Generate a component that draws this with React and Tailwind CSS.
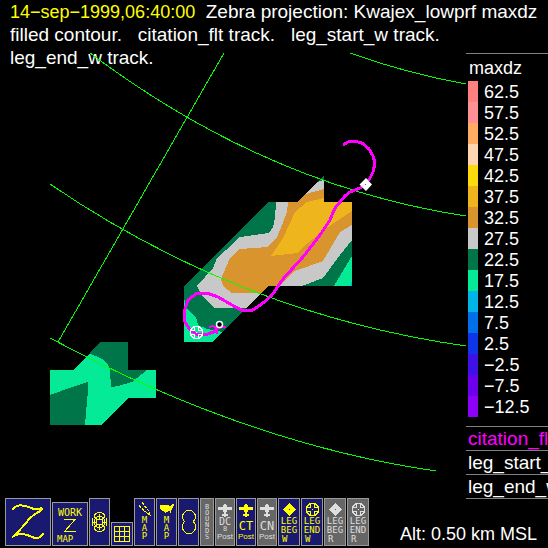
import clsx from "clsx";

const LEVELS = [
  { label: "62.5", color: "bg-[#ff8080]" },
  { label: "57.5", color: "bg-[#ff9096]" },
  { label: "52.5", color: "bg-[#ffad60]" },
  { label: "47.5", color: "bg-[#ffd6b0]" },
  { label: "42.5", color: "bg-[#fbdb0c]" },
  { label: "37.5", color: "bg-[#eeb61c]" },
  { label: "32.5", color: "bg-[#d9942e]" },
  { label: "27.5", color: "bg-[#c8c8c8]" },
  { label: "22.5", color: "bg-[#00754a]" },
  { label: "17.5", color: "bg-[#05ea96]" },
  { label: "12.5", color: "bg-[#00b4e8]" },
  { label: "7.5", color: "bg-[#0070e8]" },
  { label: "2.5", color: "bg-[#1034e8]" },
  { label: "−2.5", color: "bg-[#4010e8]" },
  { label: "−7.5", color: "bg-[#6c00ec]" },
  { label: "−12.5", color: "bg-[#8c00f8]" },
];

const TRACKS = [
  { name: "citation_flt", color: "text-[#ff00ff]" },
  { name: "leg_start_w", color: "text-white" },
  { name: "leg_end_w", color: "text-white" },
];

function WheelShape() {
  return (
    <g fill="none" stroke="currentColor" shapeRendering="crispEdges">
      <path d="M2.5 2.5V1.5H3.5V.5H9.5V1.5H10.5V2.5H11.5V3.5H12.5V9.5H11.5V10.5H10.5V11.5H9.5V12.5H3.5V11.5H2.5V10.5H1.5V9.5H.5V3.5H1.5V2.5Z" />
      <path d="M4.5 1V4.5H1M8.5 1V4.5H12M4.5 12V8.5H1M8.5 12V8.5H12M6 6.5H7" />
    </g>
  );
}

function WheelIcon() {
  return (
    <svg className="h-[13px] w-[13px] shrink-0" viewBox="0 0 13 13">
      <WheelShape />
    </svg>
  );
}

function DiamondIcon() {
  return (
    <svg className="h-[13px] w-[13px] shrink-0" viewBox="0 0 13 13">
      <path
        fill="currentColor"
        fillRule="evenodd"
        shapeRendering="crispEdges"
        d="M6.5 0L13 6.5L6.5 13L0 6.5ZM6 6H7V7H6Z"
      />
    </svg>
  );
}

function PlaneIcon() {
  return (
    <svg className="h-[13px] w-3.5 shrink-0" viewBox="0 0 14 13">
      <path
        fill="currentColor"
        shapeRendering="crispEdges"
        d="M6 0H8V1H9V3H14V6H9V8H8V10H10V12H8V13H6V12H4V10H6V8H5V6H0V3H5V1H6Z"
      />
    </svg>
  );
}

function ToolButton({ label, active = true, className, children }) {
  return (
    <button
      type="button"
      aria-label={label}
      className={clsx(
        "flex shrink-0 flex-col items-center overflow-hidden border border-[#999] font-['DejaVu_Sans_Mono',monospace] text-[9px] leading-[9px]",
        active ? "bg-[#191970] text-[#ffff00]" : "bg-[#666] text-[#dedede]",
        className,
      )}
    >
      {children}
    </button>
  );
}

function VerticalWord({ word, className }) {
  return (
    <span className={clsx("flex flex-col items-center", className)}>
      {word.split("").map((letter, i) => (
        <span key={i}>{letter}</span>
      ))}
    </span>
  );
}

function LegButton({ label, name, side, active, icon }) {
  return (
    <ToolButton label={label} active={active} className="h-12 w-[22px] pt-1">
      {icon}
      <span className="pt-px">LEG</span>
      <span>{name}</span>
      <span className="self-start pl-[3px]">{side}</span>
    </ToolButton>
  );
}

function PostButton({ label, name, sub, active }) {
  return (
    <ToolButton label={label} active={active} className="h-12 w-5 pt-[5px]">
      <PlaneIcon />
      {sub ? (
        <>
          <span className="text-[10px] leading-[9px]">{name}</span>
          <span className="text-[7px] leading-[6px]">{sub}</span>
        </>
      ) : (
        <span className="pt-[3px] text-[12px] leading-[12px]">{name}</span>
      )}
      <span className="font-['Liberation_Sans_Narrow','Liberation_Sans',sans-serif] text-[8px] leading-[9px]">
        Post
      </span>
    </ToolButton>
  );
}

function Toolbar() {
  return (
    <nav className="flex items-end gap-px">
      <ToolButton label="Zebra" className="h-12 w-[46px]">
        <svg className="h-[46px] w-11" viewBox="1 1 44 46">
          <g fill="none" stroke="currentColor" shapeRendering="crispEdges">
            <path
              strokeWidth="2"
              d="M7 12L10 9Q13 7 16 7.3Q22 8 26 10Q32 12.5 37.5 9.5M7 39Q12 35.5 18 36Q23 37 27 39Q32 41.5 36 38.5L38.5 35"
            />
            <path
              strokeWidth="2"
              d="M37.5 10.5Q36 13 31 15.5Q24 20 21 25Q16 31 7 39.5"
            />
          </g>
        </svg>
      </ToolButton>
      <ToolButton label="Work map" className="h-11 w-9 px-1 pt-[5px]">
        <span className="text-[10px] leading-[9px]">WORK</span>
        <svg className="my-0.5 h-3.5 w-3" viewBox="0 0 12 14">
          <path
            fill="none"
            stroke="currentColor"
            shapeRendering="crispEdges"
            d="M0 .5H11L.5 12.5H12"
          />
        </svg>
        <span className="self-start">MAP</span>
      </ToolButton>
      <ToolButton label="Radar" className="h-12 w-[21px] justify-center">
        <svg className="h-5 w-[17px]" viewBox="0 0 17 20">
          <g fill="none" stroke="currentColor" shapeRendering="crispEdges">
            <circle cx="8.5" cy="10" r="3" />
            <circle cx="8.5" cy="10" r="5.5" />
            <path d="M3 3.5Q5 .5 8.5 .5T14 3.5M3 16.5Q5 19.5 8.5 19.5T14 16.5M1.5 6V14M15.5 6V14M8.5 2V7M8.5 13V18M1 10H6M11 10H16M3 4.5L6 7.5M14 4.5L11 7.5M3 15.5L6 12.5M14 15.5L11 12.5" />
          </g>
        </svg>
      </ToolButton>
      <ToolButton label="Grid" className="h-6 w-[22px] justify-center">
        <svg className="h-4 w-4" viewBox="0 0 16 16">
          <path
            fill="none"
            stroke="currentColor"
            shapeRendering="crispEdges"
            d="M.5 .5H15.5V15.5H.5ZM5.5 0V16M10.5 0V16M0 5.5H16M0 10.5H16"
          />
        </svg>
      </ToolButton>
      <ToolButton label="Flight map" className="h-12 w-[21px] pt-[3px]">
        <svg className="h-3.5 w-3.5 shrink-0" viewBox="0 0 14 14">
          <path
            fill="none"
            stroke="currentColor"
            shapeRendering="crispEdges"
            d="M1 3.5L3 5.5M4 6.5L6 8.5M6 9.5H8M8 10.5L13 13.5M4 .5L6 2.5M6.5 4L8.5 6M9 7L11 9M11.5 9.5V12.5"
          />
        </svg>
        <VerticalWord word="MAP" className="leading-[8px]" />
      </ToolButton>
      <ToolButton label="US map" className="h-12 w-[21px] pt-[5px]">
        <svg className="mb-[3px] h-[9px] w-3.5 shrink-0" viewBox="0 0 14 9">
          <path
            fill="currentColor"
            shapeRendering="crispEdges"
            d="M0 1H9V2H10L11 1H12V0H14V2H13V4H12V6H11V9H10V7H8V8H6V9H5V8H4V7H2V6H1V5H0Z"
          />
        </svg>
        <VerticalWord word="MAP" className="leading-[8px]" />
      </ToolButton>
      <ToolButton label="Figure eight" className="h-12 w-[21px] justify-center">
        <svg className="h-6 w-3.5" viewBox="0 0 14 24">
          <path
            fill="none"
            stroke="currentColor"
            shapeRendering="crispEdges"
            d="M4.5 .5H9.5L11.5 2.5L13.5 5V8L11.5 11.5L13.5 15V19L11.5 21.5L9.5 23.5H4.5L2.5 21.5L.5 19V15L2.5 11.5L.5 8V5L2.5 2.5Z"
          />
        </svg>
      </ToolButton>
      <ToolButton label="Bounds" active={false} className="h-12 w-3.5 pt-[5px]">
        <VerticalWord word="BOUNDS" className="text-[7px] leading-[6px]" />
      </ToolButton>
      <PostButton label="DC8 post" name="DC" sub="8" active={false} />
      <PostButton label="CT post" name="CT" active />
      <PostButton label="CN post" name="CN" active={false} />
      <LegButton label="Leg begin W" name="BEG" side="W" active icon={<DiamondIcon />} />
      <LegButton label="Leg end W" name="END" side="W" active icon={<WheelIcon />} />
      <LegButton label="Leg begin R" name="BEG" side="R" active={false} icon={<DiamondIcon />} />
      <LegButton label="Leg end R" name="END" side="R" active={false} icon={<WheelIcon />} />
    </nav>
  );
}

function RadarMap() {
  return (
    <svg
      className="min-w-0 flex-1 self-start"
      viewBox="0 53 466 446"
      role="img"
      aria-label="Filled contour of maxdz with aircraft track"
    >
      {/* main echo, outermost level first */}
      <g shapeRendering="crispEdges">
        <path fill="#00754a" d="M184 342V286L268 202H297L324 175V202H352V286H268L212 342Z" />
        <path
          fill="#c8c8c8"
          d="M276 202H297L317 182L324 180V202H352V240L340 255L323 278L302 286H268L247 308H215L203 297L197 286L213 268L217 258L226 250L240 237L269 233L273 227L275 218Z"
        />
        <path
          fill="#d9942e"
          d="M288 202H297L306 194L324 189V202H352V225L340 232L323 261L295 271L283 282L279 286H268L261 293H232L224 287L221 280L223 274L230 258L238 250L240 249L268 247L277 237L282 225L287 212Z"
        />
        <path
          fill="#eeb61c"
          d="M271 256L283 238L295 212L307 202L324 198V202H352V211L328 227L308 243L297 253Z"
        />
        <path fill="#05ea96" d="M334 286L352 256V286Z" />
        <path fill="#00b4e8" d="M350 286L352 281V286Z" />
        <path
          fill="#05ea96"
          d="M184 298L188 310L196 317L198 325L207 329L222 332L212 342H184Z"
        />
      </g>

      {/* second echo */}
      <g shapeRendering="crispEdges">
        <path
          fill="#05ea96"
          d="M50 370H73L101 342H128V370H156V398H128L102 425H50Z"
        />
        <path
          fill="#00754a"
          d="M89 353L101 342H128V370H147L132 382L118 386L111 387L110 370L108 365L102 359Z"
        />
        <path fill="#00754a" d="M50 395L72 387L88 382V390L85 425H50Z" />
      </g>

      {/* lat/lon grid */}
      <g fill="none" stroke="#00ff00" shapeRendering="crispEdges">
        <path d="M224 53L58 342" />
        <path d="M350 53Q405 73 466 84" />
        <path d="M90 53Q267 186 466 216" />
        <path d="M50 184Q240 314 466 346" />
        <path d="M50 338Q248 444 436 471" />
      </g>

      <g fill="none" stroke="#ff00ff" shapeRendering="crispEdges">
        <path
          strokeWidth="3"
          strokeLinejoin="round"
          d="M343 145L348 142L354 141L362 143L369 149L373 156L375 163L373 172L370 178L366 184L360 188L350 192L345 196L340 202L335 208L330 220L320 235L303 257L283 279L272 295L263 303L253 310L243 311L232 305L218 297L207 293L197 293L188 300L184 312L185 322L190 330L198 335L208 334L216 331"
        />
        <path strokeWidth="2" d="M209 327L213 326L217 328V334M213 332L217 328L226 327" />
      </g>

      <circle cx="219.5" cy="324.5" r="3" fill="#000" stroke="#fff" strokeWidth="1.5" />
      <path
        fill="#fff"
        fillRule="evenodd"
        d="M366 178L372 184.5L366 191L359.5 184.5ZM365 184V185H366V184Z"
      />
      <g className="text-white" transform="translate(190 326)">
        <WheelShape />
      </g>
    </svg>
  );
}

function Legend() {
  return (
    <aside className="w-[82px] shrink-0 overflow-hidden whitespace-nowrap border-t border-[#808080]">
      <h2 className="pt-0.5 pb-px pl-[3px] leading-6">maxdz</h2>
      <ul className="pl-0.5">
        {LEVELS.map((level) => (
          <li key={level.label} className="flex h-[21px] gap-1.5 leading-[23px]">
            <span className={clsx("w-2.5", level.color)} />
            {level.label}
          </li>
        ))}
      </ul>
      <ul className="mt-[9px] border-t border-[#808080] text-[19px]">
        {TRACKS.map((track) => (
          <li
            key={track.name}
            className={clsx(
              "h-6 border-b border-[#808080] pl-0.5 leading-6",
              track.color,
            )}
          >
            {track.name}
          </li>
        ))}
      </ul>
    </aside>
  );
}

export default function App() {
  return (
    <div className="min-h-screen overflow-hidden bg-black font-['Liberation_Sans',Arial,sans-serif] text-[18px] text-white">
      <header className="whitespace-pre pl-2.5 text-[19px] leading-[23px]">
        <h1 className="h-[23px]">
          <time className="text-[18px] text-[#ffff00]">14−sep−1999,06:40:00</time>
          {"  Zebra projection: Kwajex_lowprf maxdz"}
        </h1>
        <p>{"filled contour.   citation_flt track.   leg_start_w track."}</p>
        <p>leg_end_w track.</p>
      </header>
      {/* the plot begins under the last title line */}
      <main className="-mt-4 flex">
        <RadarMap />
        <Legend />
      </main>
      <footer className="-mt-px flex items-end justify-between pr-[11px] pb-0.5 pl-[5px]">
        <Toolbar />
        <p className="leading-6 whitespace-nowrap">Alt: 0.50 km MSL</p>
      </footer>
    </div>
  );
}
